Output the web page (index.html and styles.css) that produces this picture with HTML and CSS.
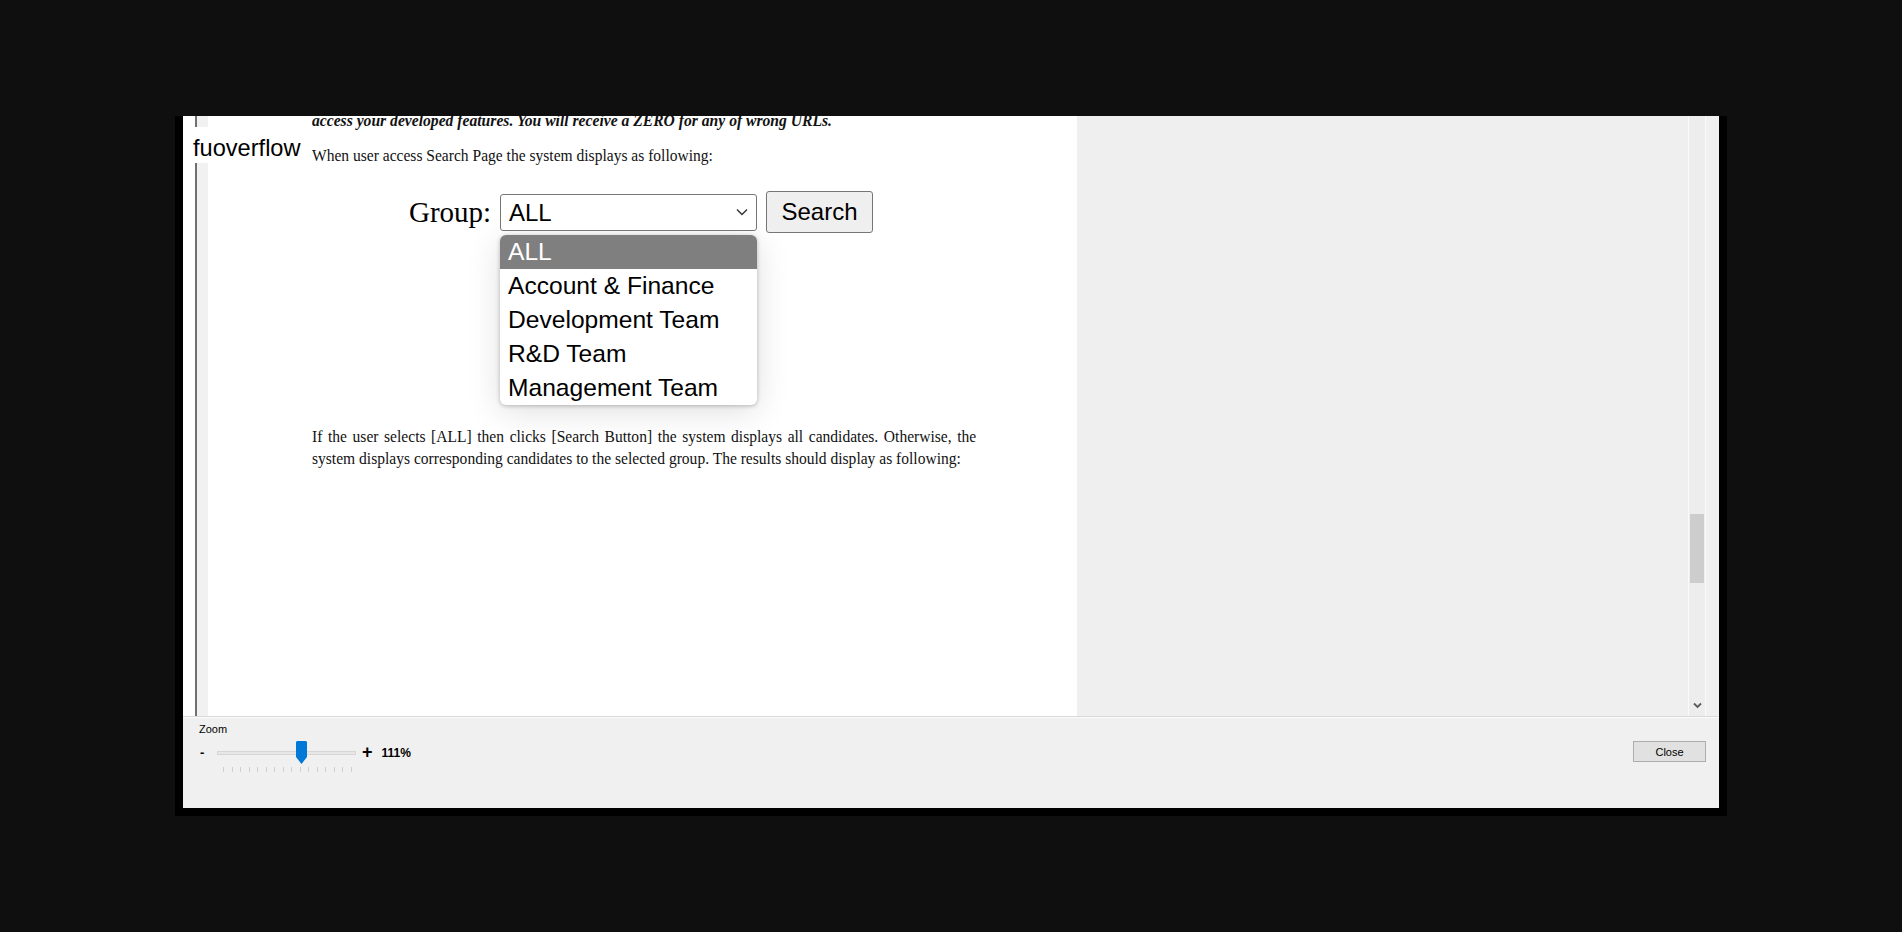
FILE: index.html
```html
<!DOCTYPE html>
<html>
<head>
<meta charset="utf-8">
<title>Document viewer</title>
<link rel="stylesheet" href="styles.css">
</head>
<body>
<div class="shadow">
  <div class="window">
    <div class="viewer">
      <div class="doc">
        <div class="gutter"></div>
        <div class="page">
          <p class="cond bi">access your developed features. You will receive a ZERO for any of wrong URLs.</p>
          <p class="cond l2">When user access Search Page the system displays as following:</p>
          <div class="shot">
            <div class="shot-row">
              <span class="grp">Group:</span>
              <div class="select"><span>ALL</span><svg class="chev" width="12" height="8" viewBox="0 0 12 8"><path d="M1 1.5 L6 6.5 L11 1.5" fill="none" stroke="#333" stroke-width="1.4"/></svg></div>
              <div class="btn">Search</div>
            </div>
            <ul class="dropdown">
              <li class="sel">ALL</li>
              <li>Account &amp; Finance</li>
              <li>Development Team</li>
              <li>R&amp;D Team</li>
              <li>Management Team</li>
            </ul>
          </div>
          <p class="cond para">If the user selects [ALL] then clicks [Search Button] the system displays all candidates. Otherwise, the system displays corresponding candidates to the selected group. The results should display as following:</p>
        </div>
      </div>
      <div class="fill"></div>
      <div class="vscroll">
        <div class="thumb"></div>
        <svg class="down" width="9" height="7" viewBox="0 0 9 7"><path d="M1 1.5 L4.5 5 L8 1.5" fill="none" stroke="#5a5a5a" stroke-width="1.8"/></svg>
      </div>
    </div>
    <div class="bottom">
      <div class="zoom">
        <div class="zoom-label">Zoom</div>
        <div class="zoom-row">
          <span class="minus">-</span>
          <div class="slider">
            <div class="track-area">
              <div class="track"></div>
              <svg class="knob" width="11" height="23" viewBox="0 0 11 23"><polygon points="0,1 1,0 10,0 11,1 11,16 5.5,23 0,16" fill="#0078d7"/></svg>
            </div>
            <div class="ticks"><i></i><i></i><i></i><i></i><i></i><i></i><i></i><i></i><i></i><i></i><i></i><i></i><i></i><i></i><i></i><i></i></div>
          </div>
          <span class="plus">+</span>
          <span class="pct">111%</span>
        </div>
      </div>
      <button class="close">Close</button>
    </div>
  </div>
</div>
<div class="brand">fuoverflow</div>
</body>
</html>
```

FILE: styles.css
```css
* { box-sizing: border-box; }
body {
  margin: 0;
  width: 1902px;
  height: 932px;
  overflow: hidden;
  background: #0f0f0f;
  padding: 116px 0 0 175px;
  position: relative;
}
.shadow {
  width: 1552px;
  padding: 0 8px 8px;
  background: #000;
}
.window {
  width: 1536px;
  height: 692px;
  background: #f0f0f0;
  display: flex;
  flex-direction: column;
  font-family: "Liberation Sans", Arial, sans-serif;
  color: #000;
}
.viewer {
  height: 600px;
  display: flex;
  margin-right: 13px;
}
.doc {
  width: 894px;
  flex: none;
  background: #fff;
  display: flex;
  overflow: hidden;
  padding-left: 12px;
}
.gutter {
  width: 13px;
  flex: none;
  border-left: 2px solid #707070;
  background: #f1f1f1;
}
.page {
  flex: 1;
  padding-left: 104px;
  font-family: "Liberation Serif", "Times New Roman", serif;
  color: #111;
}
.cond {
  margin: 0;
  transform: scaleX(0.888);
  transform-origin: 0 0;
  font-size: 17.5px;
}
.bi {
  font-weight: bold;
  font-style: italic;
  font-size: 17.6px;
  line-height: 20px;
  margin-top: -6px;
  white-space: nowrap;
}
.l2 {
  line-height: 20px;
  margin-top: 15px;
  white-space: nowrap;
}
.shot {
  margin-top: 26px;
  margin-left: 97px;
}
.shot-row {
  display: flex;
  align-items: center;
  height: 42px;
}
.grp {
  width: 91px;
  flex: none;
  font-size: 29px;
  line-height: 42px;
  color: #000;
}
.select {
  width: 257px;
  height: 37px;
  border: 1px solid #767676;
  border-radius: 3px;
  background: #fff;
  display: flex;
  align-items: center;
  justify-content: space-between;
  padding: 0 8px;
  font: 24px/35px "Liberation Sans", Arial, sans-serif;
  color: #000;
}
.btn {
  margin-left: 9px;
  width: 107px;
  height: 42px;
  border: 1px solid #767676;
  border-radius: 3px;
  background: #efefef;
  display: flex;
  align-items: center;
  justify-content: center;
  font: 24px "Liberation Sans", Arial, sans-serif;
  color: #000;
}
.dropdown {
  list-style: none;
  margin: 2px 0 0 91px;
  padding: 0;
  width: 257px;
  border-radius: 6px;
  overflow: hidden;
  background: #fff;
  box-shadow: 0 6px 34px rgba(0, 0, 0, 0.13), 0 1px 4px rgba(0, 0, 0, 0.25);
  font: 24.6px/34px "Liberation Sans", Arial, sans-serif;
  color: #000;
}
.dropdown li {
  height: 34px;
  padding-left: 8px;
  white-space: nowrap;
}
.dropdown li.sel {
  background: #7f7f7f;
  color: #fff;
}
.para {
  width: 748px;
  margin-top: 20px;
  line-height: 22px;
  text-align: justify;
}
.fill {
  flex: 1;
  background: #efefef;
}
.vscroll {
  width: 18px;
  flex: none;
  display: flex;
  flex-direction: column;
  align-items: center;
  background: #ededed;
  border-left: 1px solid #fafafa;
  border-right: 1px solid #fafafa;
}
.thumb {
  width: 14px;
  height: 69px;
  margin-top: 398px;
  background: #cdcdcd;
}
.down {
  margin-top: auto;
  margin-bottom: 7px;
}
.bottom {
  flex: 1;
  display: flex;
  justify-content: space-between;
  border-top: 1px solid #d9d9d9;
  box-shadow: inset 0 1px 0 #fbfbfb;
}
.zoom {
  padding: 6px 0 0 16px;
}
.zoom-label {
  font-size: 11px;
  line-height: 13px;
}
.zoom-row {
  display: flex;
  align-items: flex-start;
  margin-top: 5px;
}
.minus {
  margin-left: 1px;
  width: 4px;
  font: bold 13px/23px "Liberation Sans", Arial, sans-serif;
}
.slider {
  margin-left: 13px;
  width: 139px;
}
.track-area {
  position: relative;
  height: 23px;
  padding-top: 10px;
}
.track {
  height: 4px;
  background: #e7e7e7;
  border: 1px solid #d6d6d6;
}
.knob {
  position: absolute;
  left: 79px;
  top: 0;
}
.ticks {
  display: flex;
  justify-content: space-between;
  padding: 0 4px 0 6px;
  margin-top: 3px;
  height: 5px;
}
.ticks i {
  width: 1px;
  height: 5px;
  background: #cfcfcf;
}
.plus {
  margin-left: 6px;
  font: bold 18px/23px "Liberation Sans", Arial, sans-serif;
}
.pct {
  margin-left: 9px;
  padding-top: 1px;
  font: bold 12px/23px "Liberation Sans", Arial, sans-serif;
}
.close {
  margin: 24px 13px 0 0;
  width: 73px;
  height: 21px;
  padding: 0;
  border: 1px solid #adadad;
  background: #e1e1e1;
  font: 11px "Liberation Sans", Arial, sans-serif;
  color: #000;
}
.brand {
  position: absolute;
  left: 184px;
  top: 127px;
  width: 118px;
  height: 36px;
  padding: 6px 0 0 9px;
  background: #fff;
  font: 23.6px/30px "Liberation Sans", Arial, sans-serif;
  color: #000;
}
```
